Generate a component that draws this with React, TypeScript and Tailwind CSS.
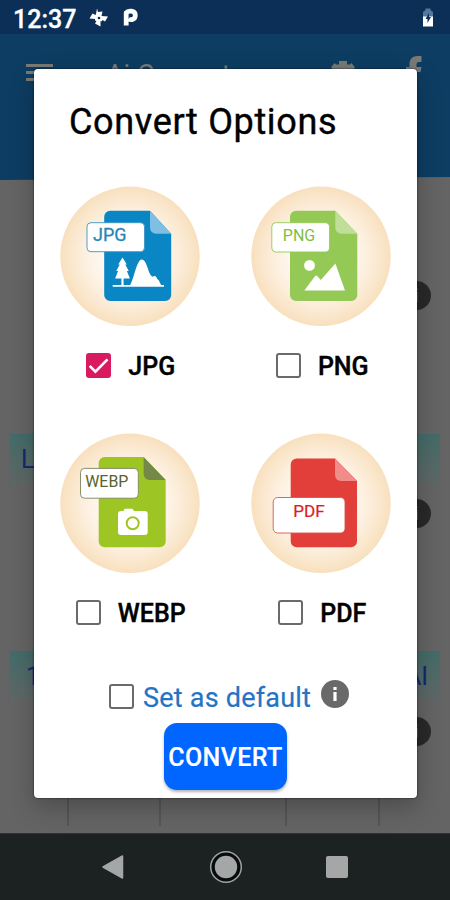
import type { ReactNode } from "react"
import { useState } from "react"

type Format = "JPG" | "PNG" | "WEBP" | "PDF"

interface CheckboxProps {
  checked: boolean
  onChange: () => void
  label: string
}

function Checkbox({ checked, onChange, label }: CheckboxProps) {
  return (
    <button
      type="button"
      role="checkbox"
      aria-checked={checked}
      aria-label={label}
      onClick={onChange}
      className={
        checked
          ? "w-[25px] h-[25px] rounded-[3px] bg-[#d81b60] flex items-center justify-center shrink-0"
          : "w-[25px] h-[25px] rounded-[3px] bg-white border-[2.5px] border-[#6a6a6a] shrink-0"
      }
    >
      {checked && (
        <svg width="25" height="25" viewBox="0 0 26 26" fill="none">
          <path d="M3.8 13.4l6 6L22.4 6.6" stroke="#fff" strokeWidth="2.7" />
        </svg>
      )}
    </button>
  )
}

function FormatBadge({ id, children }: { id: string; children: ReactNode }) {
  return (
    <svg width="140" height="140" viewBox="0 0 140 140" className="font-['Roboto',sans-serif]">
      <defs>
        <radialGradient id={id}>
          <stop offset="0.35" stopColor="#fffaf5" />
          <stop offset="0.7" stopColor="#fceedb" />
          <stop offset="1" stopColor="#f8e0be" />
        </radialGradient>
      </defs>
      <circle cx="70" cy="70.300" r="69.700" fill={`url(#${id})`} />
      {children}
    </svg>
  )
}

function JpgIcon() {
  return (
    <FormatBadge id="glow-jpg">
      <path d="M50.2 24.8H90L111.2 47.8V109a6 6 0 0 1-6 6h-55a6 6 0 0 1-6-6V30.800a6 6 0 0 1 6-6z" fill="#0a86c4" />
      <path d="M90 24.8L111.2 47.8H96a6 6 0 0 1-6-6z" fill="#7fbfe3" />
      <rect x="27" y="36.700" width="57.500" height="29" rx="4" fill="#fff" stroke="#3b94c4" strokeWidth="0.9" />
      <text x="33" y="54.800" fontSize="18" fill="#2685b8" stroke="#2685b8" strokeWidth="0.3" textLength="33.500" lengthAdjust="spacingAndGlyphs">JPG</text>
      <path d="M62.500 71.500l4.300 7h-1.600l3.600 6.500h-1.900l3 7.500h-6.300v6.500h-2.200v-6.500h-6.300l3-7.500h-1.900l3.600-6.500h-1.600z" fill="#fff" />
      <path d="M70 99.300c3-5 4.500-14 7.800-21.500 2.400-5.500 5.600-5.700 8-.5 2.500 5.200 3.300 11.500 6.600 13.500 2.200-1.500 4-.7 4.800 2.200 2.200.8 2.500 4.300 4.300 6.300z" fill="#fff" />
      <path d="M52.700 98.900h51.300v1.800H52.700z" fill="#fff" />
    </FormatBadge>
  )
}

function PngIcon() {
  return (
    <FormatBadge id="glow-png">
      <path d="M45 24.8H84.300L106.300 47.800V109a6 6 0 0 1-6 6H45a6 6 0 0 1-6-6V30.800a6 6 0 0 1 6-6z" fill="#95c956" />
      <path d="M84.300 24.800L106.300 47.800H90.300a6 6 0 0 1-6-6z" fill="#bfdf98" />
      <rect x="20.800" y="36.700" width="57.800" height="29.300" rx="4" fill="#fff" stroke="#95c956" strokeWidth="0.9" />
      <text x="31.800" y="54.800" fontSize="16" fill="#82bd43" textLength="32.500" lengthAdjust="spacingAndGlyphs">PNG</text>
      <circle cx="58.500" cy="79.400" r="5.400" fill="#fff" />
      <path d="M53.300 104.400L64 90.200q1.200-1.200 2.400 0L69.800 94 84.400 77.500 94 104.400z" fill="#fff" />
    </FormatBadge>
  )
}

function WebpIcon() {
  return (
    <FormatBadge id="glow-webp">
      <path d="M44.700 24H83.600L105.700 47V108.300a6 6 0 0 1-6 6H44.700a6 6 0 0 1-6-6V30a6 6 0 0 1 6-6z" fill="#9dc625" />
      <path d="M83.600 24L105.700 47H89.600a6 6 0 0 1-6-6z" fill="#748947" />
      <rect x="20.500" y="35.400" width="57.800" height="29.800" rx="4" fill="#fff" stroke="#7c8460" strokeWidth="0.9" />
      <text x="25.300" y="54.300" fontSize="16" fill="#56642e" textLength="43" lengthAdjust="spacingAndGlyphs">WEBP</text>
      <path d="M61 78h2.400l1.300-2.200h7.800L74 78h10.700a3 3 0 0 1 3 3v18a3 3 0 0 1-3 3H61a3 3 0 0 1-3-3V81a3 3 0 0 1 3-3z" fill="#fff" />
      <circle cx="72.700" cy="90.200" r="6" fill="none" stroke="#9dc625" strokeWidth="2" />
    </FormatBadge>
  )
}

function PdfIcon() {
  return (
    <FormatBadge id="glow-pdf">
      <path d="M45.700 25.400H84L106 48V108.300a6 6 0 0 1-6 6H45.700a6 6 0 0 1-6-6V31.400a6 6 0 0 1 6-6z" fill="#e23f3a" />
      <path d="M84 25.400L106 48H90a6 6 0 0 1-6-6z" fill="#f08c8a" />
      <rect x="22.200" y="64.500" width="71.800" height="35.500" rx="4.500" fill="#fff" stroke="#d9544f" strokeWidth="0.9" />
      <text x="42.300" y="84.300" fontSize="17" fill="#d9201e" stroke="#d9201e" strokeWidth="0.2" textLength="31.500" lengthAdjust="spacingAndGlyphs">PDF</text>
    </FormatBadge>
  )
}

const formats: { name: Format; icon: ReactNode }[] = [
  { name: "JPG", icon: <JpgIcon /> },
  { name: "PNG", icon: <PngIcon /> },
  { name: "WEBP", icon: <WebpIcon /> },
  { name: "PDF", icon: <PdfIcon /> },
]

function StatusBar() {
  return (
    <header className="h-[34px] bg-[#0b2f57] flex items-center pl-[13px] pr-[16px] text-white shrink-0">
      <span className="text-[25px] font-medium leading-none mt-[5px] w-[64px] whitespace-nowrap [-webkit-text-stroke:0.3px_white]">12:37</span>
      <svg width="20" height="20" viewBox="0 0 20 20" className="ml-[12px] mt-[1px]" fill="#fff">
        <path d="M8 0.500l1 3.500 4.500-.5-1 4.500 6.500.5-3 5-2.500-1.500-1 1.500-1-.5v5.500l-5.500-3 1.500-2.500-1.500-.5v-1.500l-5.500-.5 3-5L6.500 7l.5-1z" />
        <circle cx="10" cy="10" r="1.300" fill="#0b2f57" />
      </svg>
      <svg width="16" height="20" viewBox="0 0 16 20" className="ml-[14px] mt-[2px]">
        <path d="M3.200 17.500V4.800C5 2.400 12.300 2 12.300 7.300c0 4.400-4.300 5-6.600 3.700" fill="none" stroke="#fff" strokeWidth="4.800" strokeLinejoin="round" />
      </svg>
      <svg width="12" height="20" viewBox="0 0 12 20" className="ml-auto mt-[2px]">
        <path d="M3.500 0.500h5V2L11 4v5H1V4l2.500-2z" fill="#55779c" />
        <path d="M1 8.500h10V18.500H1z" fill="#fff" />
        <path d="M7 5L3.500 11h2v4l3.500-6H7z" fill="#0b2f57" />
      </svg>
    </header>
  )
}

function AppBar() {
  return (
    <div className="bg-[#646464] shrink-0">
      <div className="h-[146px] bg-[#0d3d62] flex items-start pt-[20px] pl-[26px] pr-[28px] text-[#777a75] [clip-path:polygon(0_0,100%_0,100%_98%,0_100%)]">
        <svg width="27" height="24" viewBox="0 0 27 24" className="mt-[8px]" fill="currentColor">
          <path d="M0 2h27v3H0zM0 9h27v3H0zM0 16h27v3H0z" />
        </svg>
        <span className="ml-[53px] mt-[5px] text-[27px] leading-[32px]">Ai Convert</span>
        <svg width="24" height="26" viewBox="0 0 24 24" className="ml-auto mt-[6px]" fill="currentColor">
          <path d="M8 0h8v3.500h3l1.500-1.500L24 6.500 22.500 8v8l1.500 2-3.500 4-3-1.500L16 24H8l-1.500-3.500-3 1.500L0 18l1.500-2V8L0 6.500 3.500 2 5 3.500h3z" />
        </svg>
        <svg width="16" height="30" viewBox="0 0 16 30" className="ml-[51px] mt-[2px]" fill="currentColor">
          <path d="M15.500 0v6h-2.500c-2 0-2.500 1-2.500 3v2h5l-1 5h-4v14h-6V16H0v-5h3.500V8c0-5 3-8 8-8z" />
        </svg>
      </div>
    </div>
  )
}

function InfoDot() {
  return (
    <div className="w-[29px] h-[29px] rounded-full bg-[#292929] text-[#646464] flex items-center justify-center text-lg font-bold self-end mr-[19px]">
      i
    </div>
  )
}

function SectionTitle({ left, right }: { left: string; right?: string }) {
  return (
    <div className="h-[49px] mx-[10px] bg-linear-to-b from-[#426c69] to-[#5e6766] flex items-center justify-between pl-[11px] pr-[12px] pt-[2px] text-[25px] text-[#14296f] shrink-0">
      <span>{left}</span>
      <span>{right}</span>
    </div>
  )
}

function Backdrop() {
  return (
    <div className="flex-1 flex flex-col bg-[#646464] overflow-hidden pt-[101px]">
      <InfoDot />
      <div className="mt-[124px] flex flex-col">
        <SectionTitle left="L" />
      </div>
      <div className="mt-[16px] flex flex-col">
        <InfoDot />
      </div>
      <div className="mt-[123px] flex flex-col">
        <SectionTitle left={"\u20091"} right="AI" />
      </div>
      <div className="mt-[17px] flex flex-col">
        <InfoDot />
      </div>
      <div className="mt-[19px] h-[61px] flex pl-[67px]">
        <div className="w-[92px] border-l-2 border-[#555]" />
        <div className="w-[126px] border-l-2 border-[#555]" />
        <div className="w-[93px] border-l-2 border-[#555]" />
        <div className="border-l-2 border-[#555]" />
      </div>
    </div>
  )
}

function NavBar() {
  return (
    <nav className="h-[67px] bg-[#1c2221] border-t border-[#2e3433] shrink-0 flex items-center justify-between pl-[101px] pr-[102px]">
      <svg width="24" height="28" viewBox="0 0 24 28">
        <path d="M2 14L21.500 3v22z" fill="#a5a7a7" stroke="#a5a7a7" strokeWidth="1.500" strokeLinejoin="round" />
      </svg>
      <svg width="34" height="34" viewBox="0 0 34 34">
        <circle cx="17" cy="17" r="15.300" fill="#080b0b" stroke="#a0a3a3" strokeWidth="1.500" />
        <circle cx="17" cy="17" r="11.200" fill="#a5a7a7" />
      </svg>
      <div className="w-[22px] h-[22px] rounded-[2px] bg-[#a5a7a7]" />
    </nav>
  )
}

export default function App() {
  const [selected, setSelected] = useState<Format>("JPG")
  const [isDefault, setIsDefault] = useState(false)

  return (
    <div className="relative w-[450px] h-[900px] overflow-hidden flex flex-col font-['Roboto',sans-serif]">
      <StatusBar />
      <AppBar />
      <Backdrop />
      <NavBar />

      <div className="absolute left-[34px] top-[69px] w-[383px] h-[729px] bg-white rounded-[4px] shadow-[0_9px_24px_rgba(0,0,0,0.25),0_0_2px_rgba(0,0,20,0.8)] flex flex-col">
        <h2 className="h-[117px] pt-[32px] pl-[35px] text-[36px] leading-[42px] tracking-[0.65px] text-black whitespace-nowrap [-webkit-text-stroke:0.4px_black]">
          Convert Options
        </h2>

        <div className="grid grid-cols-2 gap-y-[54px]">
          {formats.map((format) => (
            <div key={format.name} className="flex flex-col items-center">
              {format.icon}
              <div className="mt-[27px] h-[26px] flex items-start gap-[17px] pl-[2px]">
                <Checkbox
                  label={format.name}
                  checked={selected === format.name}
                  onChange={() => setSelected(format.name)}
                />
                <span className="pt-[1px] text-[25px] leading-[26px] font-medium text-black [-webkit-text-stroke:0.4px_black]">
                  {format.name}
                </span>
              </div>
            </div>
          ))}
        </div>

        <div className="mt-[54px] h-[35px] flex pl-[75px]">
          <div className="mt-[4px]">
            <Checkbox label="Set as default" checked={isDefault} onChange={() => setIsDefault(!isDefault)} />
          </div>
          <span className="ml-[9px] mt-[2px] w-[168px] text-[27px] leading-[32px] tracking-[0.22px] text-[#2474c5] whitespace-nowrap [-webkit-text-stroke:0.2px_#2474c5]">
            Set as default
          </span>
          <svg width="28" height="28" viewBox="0 0 28 28" className="ml-[10px]">
            <circle cx="14" cy="14" r="14" fill="#696969" />
            <path d="M12.400 12h3.200v9h-3.200zM12.400 7h3.200v3h-3.200z" fill="#fff" />
          </svg>
        </div>

        <button
          type="button"
          className="mt-[8px] ml-[130px] w-[123px] h-[67px] rounded-[13px] bg-[#0066ff] text-white text-[25px] tracking-[0.4px] font-medium shadow-[0_2px_3px_rgba(0,0,0,0.3)] whitespace-nowrap pt-[3px] [-webkit-text-stroke:0.2px_white]"
        >
          CONVERT
        </button>
      </div>
    </div>
  )
}
